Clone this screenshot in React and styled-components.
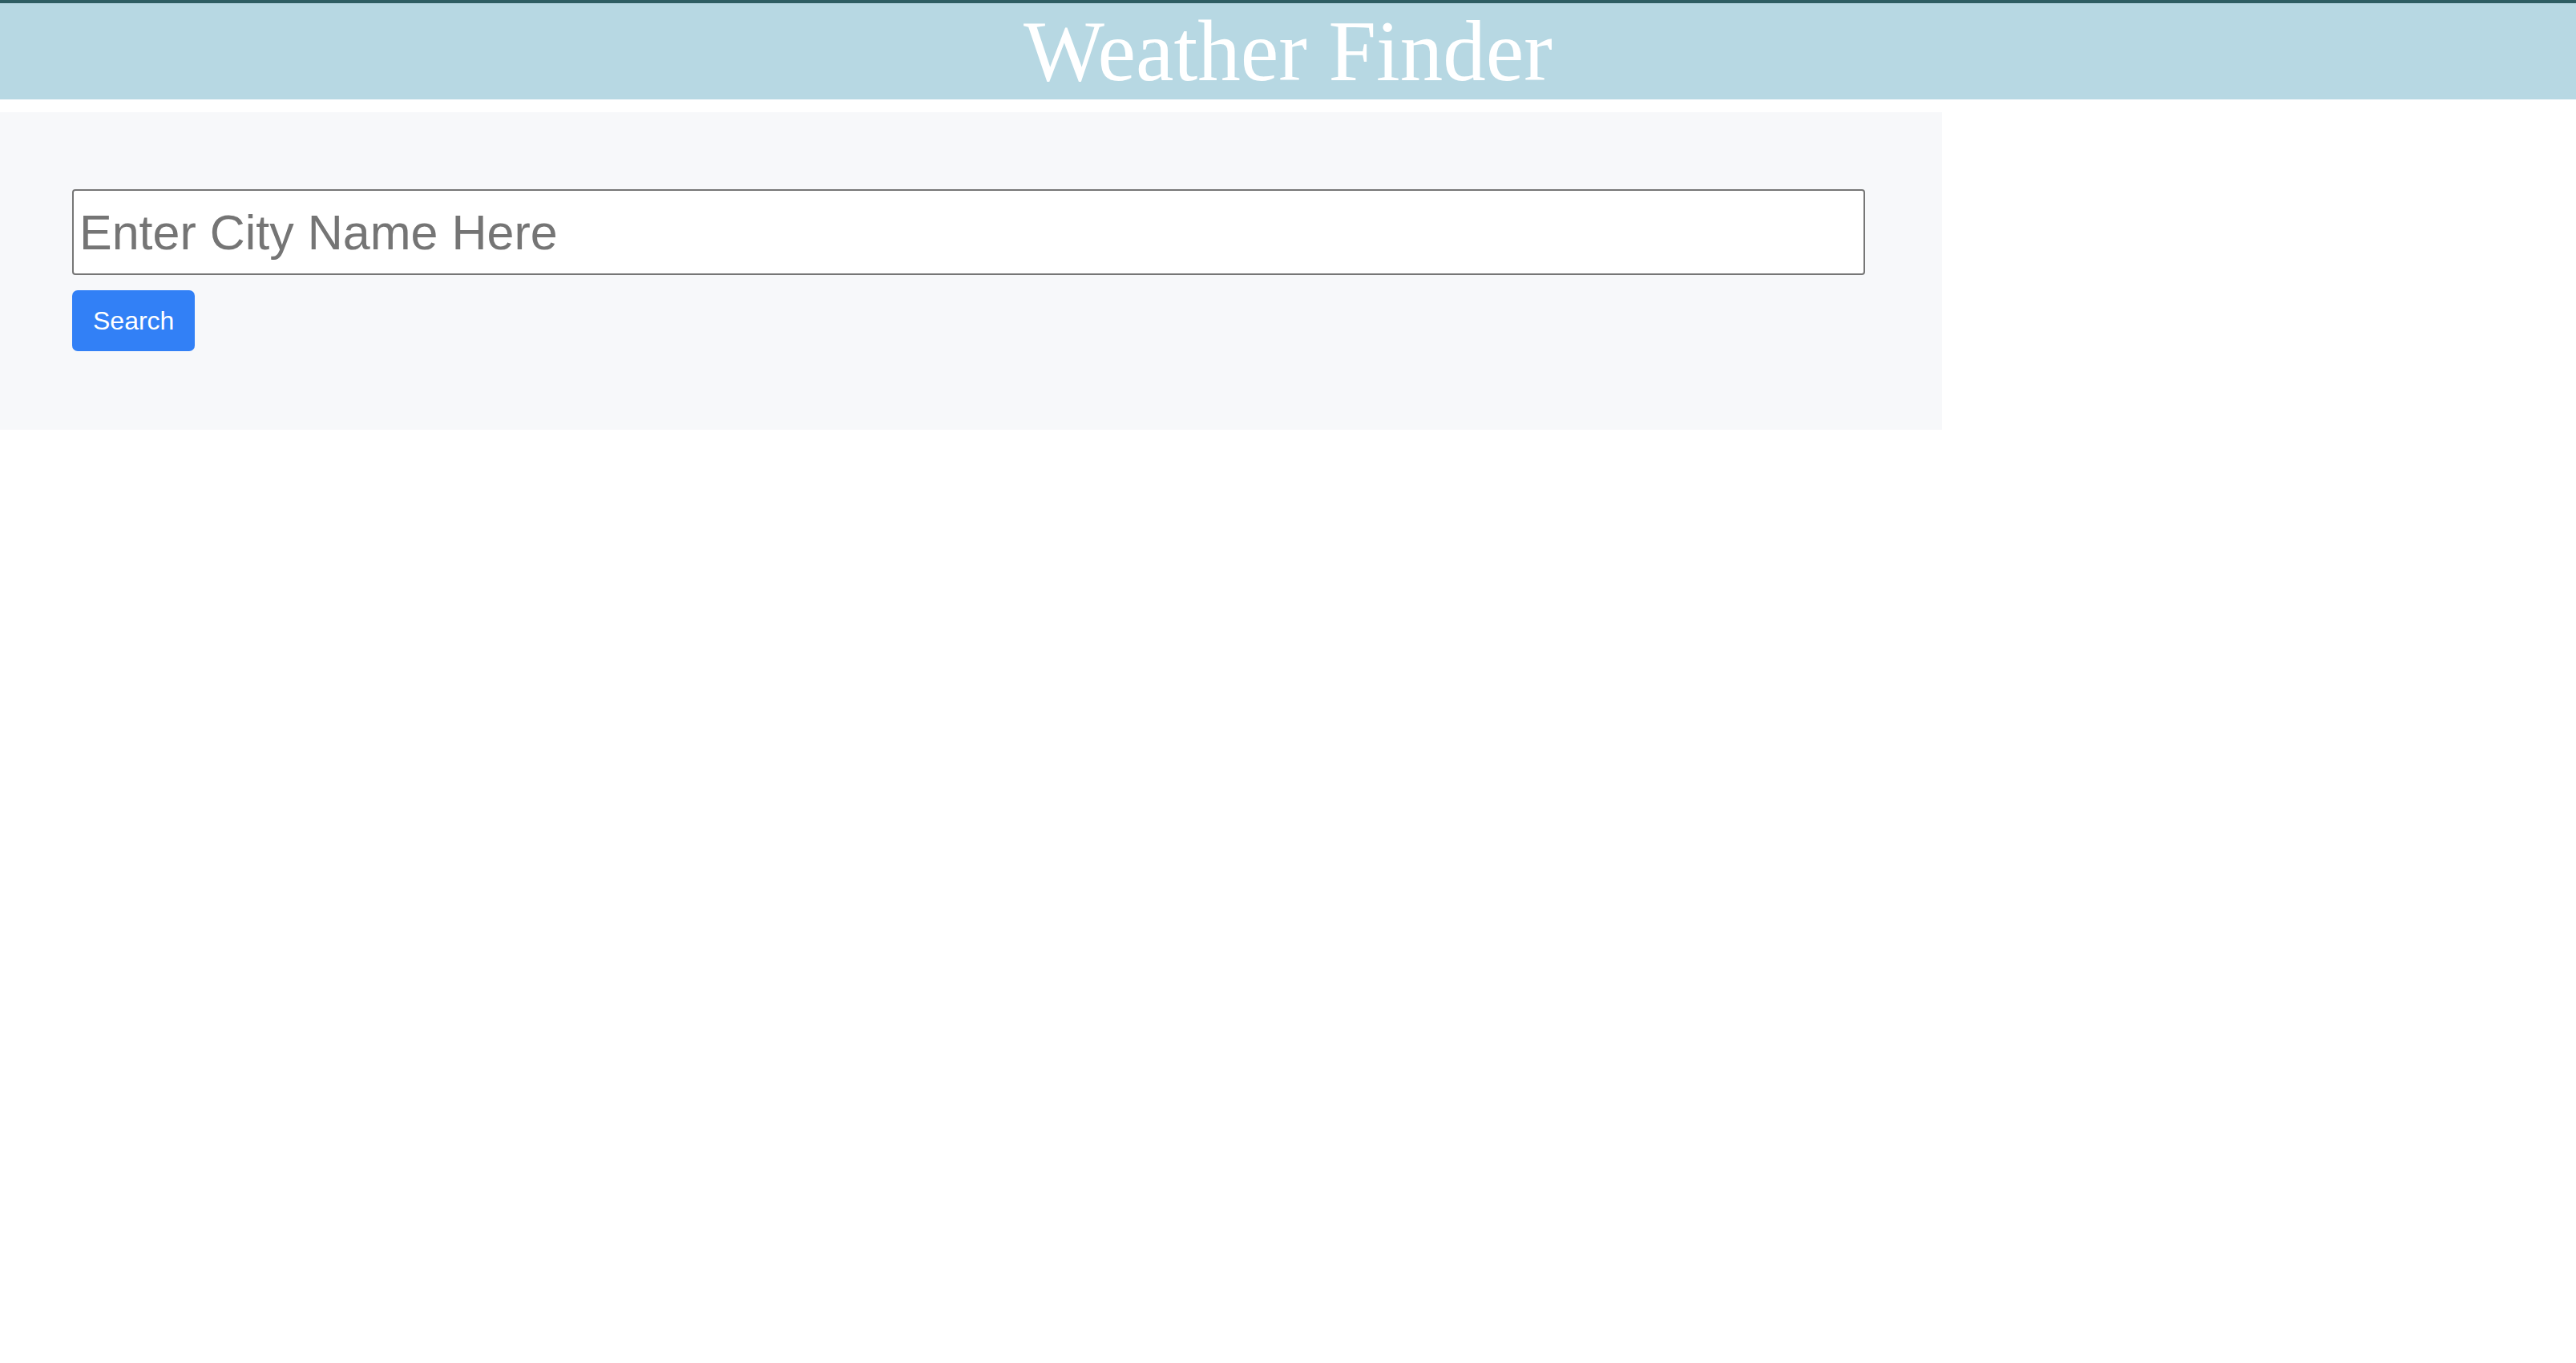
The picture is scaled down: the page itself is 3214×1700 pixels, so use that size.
import React, { useState } from "react";
import styled, { createGlobalStyle } from "styled-components";

const GlobalStyle = createGlobalStyle`
    html, body {
        margin: 0;
        padding: 0;
        background: #fff;
    }
    * {
        box-sizing: border-box;
    }
`;

export default function App() {
    const [city, setCity] = useState("");

    const search = (e) => {
        e.preventDefault();
    };

    return (
        <>
            <GlobalStyle />
            <Header>
                <Title>Weather Finder</Title>
            </Header>
            <Panel>
                <form onSubmit={search}>
                    <CityInput
                        type="text"
                        value={city}
                        onChange={(e) => setCity(e.target.value)}
                        placeholder="Enter City Name Here"
                    />
                    <SearchButton type="submit">Search</SearchButton>
                </form>
            </Panel>
        </>
    );
}

const Header = styled.header`
    height: 124px;
    border-top: 4px solid #2e5d63;
    background: #b7d8e3;
    display: flex;
    align-items: center;
    justify-content: center;
`;

const Title = styled.h1`
    margin: 0;
    font-family: "Liberation Serif", "DejaVu Serif", serif;
    font-weight: 400;
    font-size: 107px;
    line-height: 1;
    color: #fff;
`;

const Panel = styled.div`
    width: 2423px;
    margin-top: 16px;
    padding: 96px 96px 98px 90px;
    background: #f7f8fa;
    form {
        display: flex;
        flex-direction: column;
        align-items: flex-start;
        gap: 19px;
    }
`;

const CityInput = styled.input`
    width: 100%;
    height: 107px;
    padding: 0 7px;
    font-family: "Liberation Sans", Arial, sans-serif;
    font-size: 61px;
    color: #333;
    background: #fff;
    border: 2px solid #767676;
    border-radius: 4px;
    outline: none;
    &::placeholder {
        color: #757575;
    }
`;

const SearchButton = styled.button`
    height: 76px;
    padding: 0 26px;
    font-family: "Liberation Sans", Arial, sans-serif;
    font-size: 32px;
    color: #fff;
    background: #3280f6;
    border: none;
    border-radius: 7px;
    cursor: pointer;
`;
